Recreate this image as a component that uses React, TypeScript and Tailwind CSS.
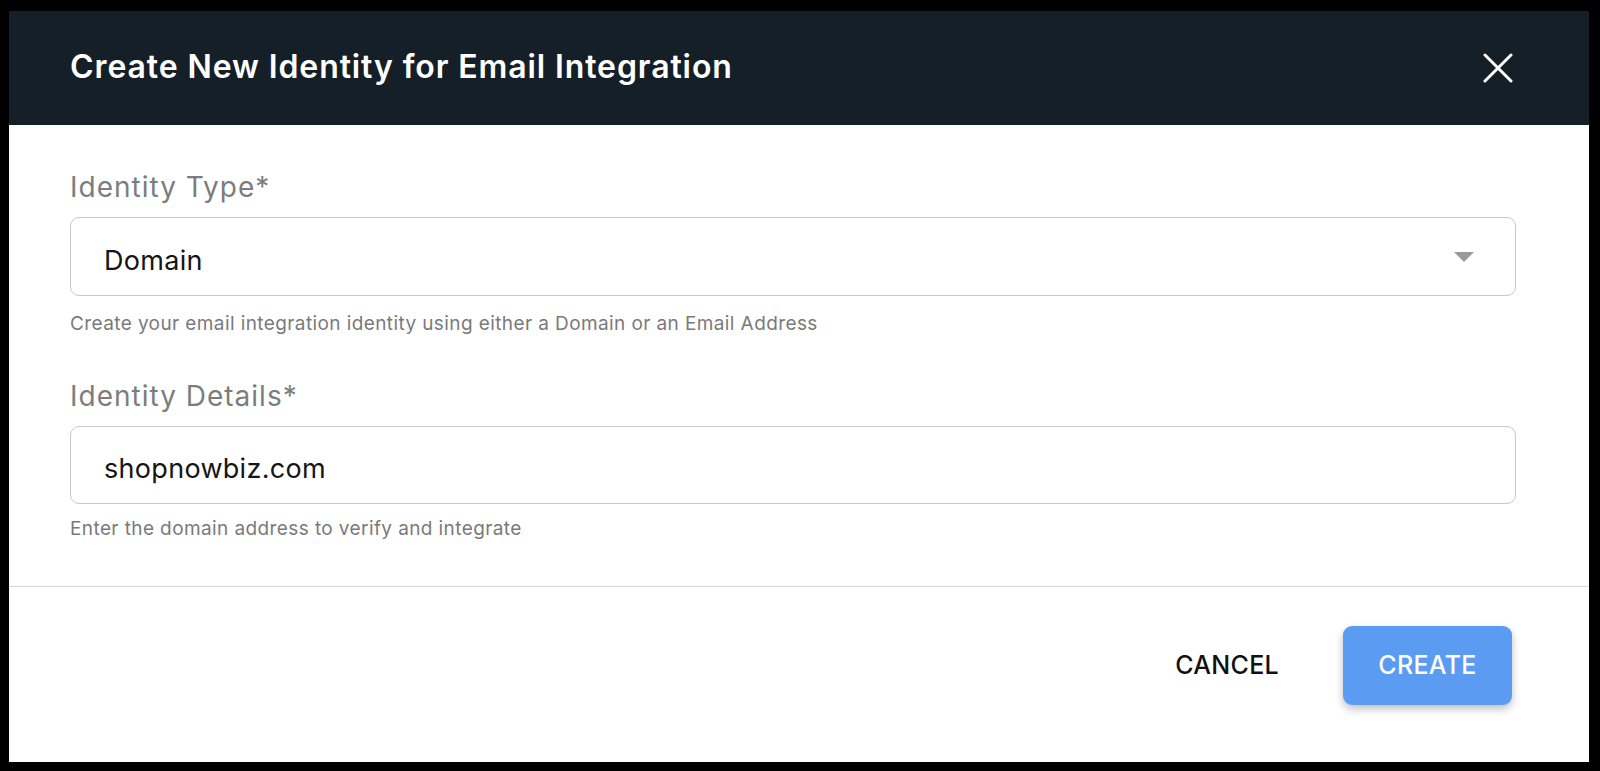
import React from 'react';

const font = { fontFamily: 'Inter, "Noto Sans", sans-serif' };

function CloseIcon() {
  return (
    <svg width="30" height="30" viewBox="0 0 30 30" fill="none" stroke="white" strokeWidth="3" strokeLinecap="round">
      <path d="M2 2 L28 28 M28 2 L2 28" />
    </svg>
  );
}

function Field({
  label,
  value,
  helper,
  select,
  boxClass,
  helperClass,
}: {
  label: string;
  value: string;
  helper: string;
  select?: boolean;
  boxClass: string;
  helperClass: string;
}) {
  return (
    <div className="flex flex-col">
      <label className="text-[28px] leading-[32px] tracking-[1px] text-[#7d7d7d] font-normal">{label}</label>
      <div
        className={`mt-[14px] flex items-center justify-between rounded-[9px] border border-[#c9c9c9] pl-[33px] pr-[41px] pt-[9px] ${boxClass}`}
      >
        <span className="text-[27px] tracking-[0.3px] text-[#151515]">{value}</span>
        {select && (
          <svg width="20" height="10" viewBox="0 0 20 10" className="-mt-[9px]">
            <path d="M0 0 L20 0 L10 10 Z" fill="#9a9a9a" />
          </svg>
        )}
      </div>
      <p className={`text-[19px] leading-[24px] tracking-[0.4px] text-[#7a7a7a] ${helperClass}`}>{helper}</p>
    </div>
  );
}

export default function App() {
  return (
    <div className="h-[771px] w-full bg-black pt-[11px] pl-[9px] pr-[11px] pb-[9px]" style={font}>
      <div className="flex h-full flex-col bg-white">
        {/* Header */}
        <div className="flex h-[114px] shrink-0 items-center justify-between bg-[#151f28] pl-[61px] pr-[76px]">
          <h1 className="text-[32px] font-semibold text-white tracking-[0.9px] -mt-[2px]">
            Create New Identity for Email Integration
          </h1>
          <CloseIcon />
        </div>

        {/* Body */}
        <div className="flex flex-col gap-[44px] pl-[61px] pr-[73px] pt-[46px] pb-[45px] border-b border-[#d6d6d6]">
          <Field
            label="Identity Type*"
            value="Domain"
            helper="Create your email integration identity using either a Domain or an Email Address"
            select
            boxClass="h-[79px]"
            helperClass="mt-[16px]"
          />
          <Field
            label="Identity Details*"
            value="shopnowbiz.com"
            helper="Enter the domain address to verify and integrate"
            boxClass="h-[78px]"
            helperClass="mt-[13px]"
          />
        </div>

        {/* Footer */}
        <div className="flex flex-1 items-start justify-end gap-[64px] pt-[39px] pr-[77px]">
          <button className="h-[79px] text-[25px] font-medium text-[#111] tracking-[0.3px]">CANCEL</button>
          <button className="h-[79px] w-[169px] rounded-[9px] bg-[#5b9bf2] text-[25px] font-medium text-white tracking-[0.3px] shadow-[0_4px_8px_rgba(0,0,0,0.25)]">
            CREATE
          </button>
        </div>
      </div>
    </div>
  );
}
